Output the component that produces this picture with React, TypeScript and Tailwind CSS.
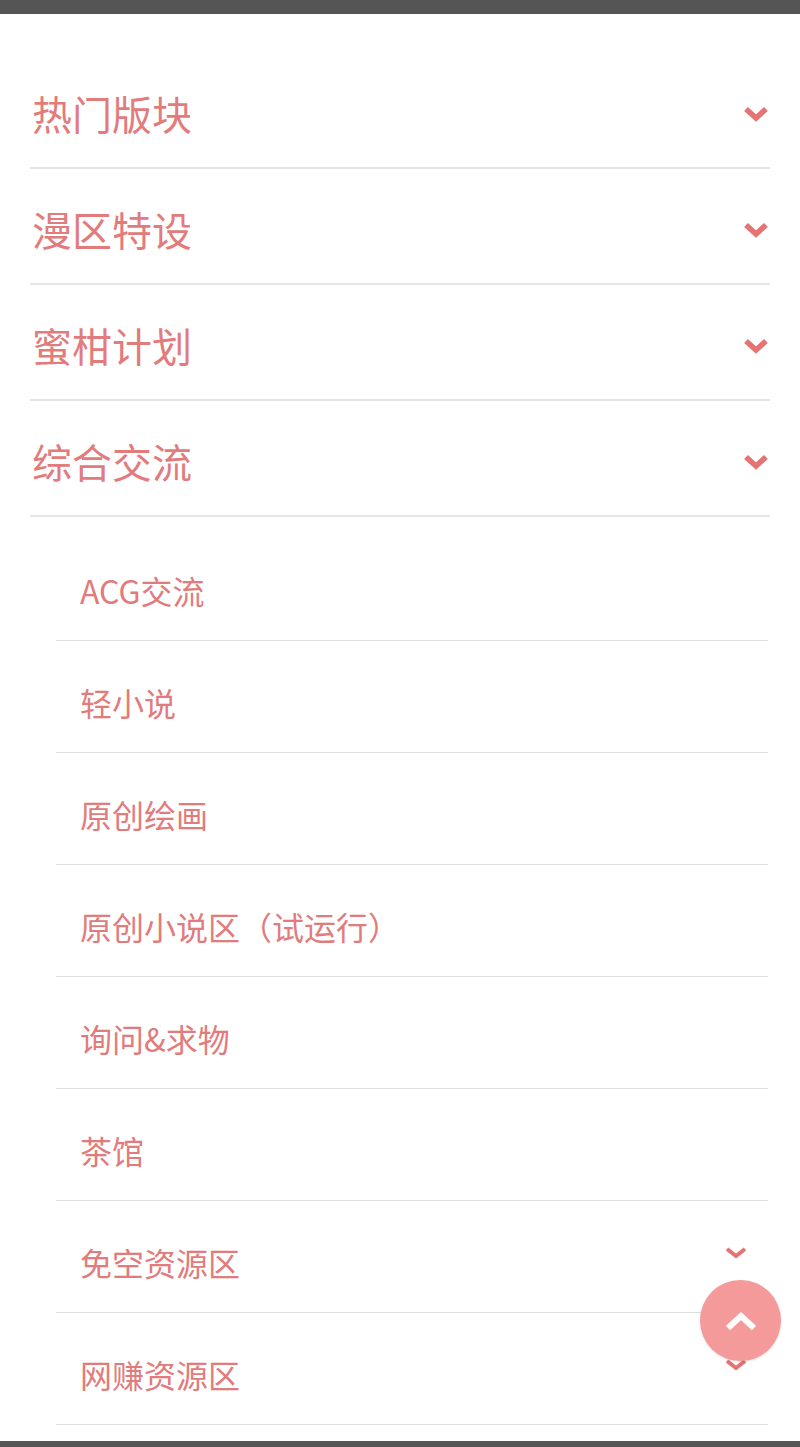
import React from "react";

const mainSections = ["热门版块", "漫区特设", "蜜柑计划", "综合交流"];

const subSections = [
  { name: "ACG交流", more: false },
  { name: "轻小说", more: false },
  { name: "原创绘画", more: false },
  { name: "原创小说区（试运行）", more: false },
  { name: "询问&求物", more: false },
  { name: "茶馆", more: false },
  { name: "免空资源区", more: true },
  { name: "网赚资源区", more: true },
];

const Chevron = ({ size = "big" }: { size?: "big" | "small" }) =>
  size === "big" ? (
    <svg width="28" height="18" viewBox="0 0 28 18" className="shrink-0">
      <polyline points="4,4 14,13 24,4" fill="none" stroke="#e57373" strokeWidth="5.5" strokeLinejoin="miter" />
    </svg>
  ) : (
    <svg width="24" height="14" viewBox="0 0 24 14" className="shrink-0">
      <polyline points="3,3 12,10 21,3" fill="none" stroke="#e57373" strokeWidth="4" strokeLinejoin="miter" />
    </svg>
  );

const App = () => {
  return (
    <div
      className="relative w-[800px] h-[1447px] flex flex-col bg-white overflow-hidden"
      style={{ fontFamily: '"Noto Sans CJK SC", "Noto Sans", sans-serif' }}
    >
      <div className="h-[14px] bg-[#555555] shrink-0" />

      <div className="flex-1 overflow-hidden pt-[39px]">
        {mainSections.map((title) => (
          <div
            key={title}
            className="mx-[30px] h-[116px] pt-[6px] flex items-center justify-between border-b-2 border-[#e6e6e6]"
          >
            <span className="pl-[2px] text-[40px] leading-none text-[#e27b7b]">{title}</span>
            <span className="mt-[2px]">
              <Chevron />
            </span>
          </div>
        ))}

        <div className="pt-3 ml-[56px] mr-[32px]">
          {subSections.map((item) => (
            <div
              key={item.name}
              className="h-[112px] pt-[10px] flex items-center justify-between border-b border-[#dedede]"
            >
              <span className="pl-[24px] text-[32px] leading-none text-[#e27b7b]">{item.name}</span>
              {item.more && (
                <span className="mr-[20px] -mt-[18px]">
                  <Chevron size="small" />
                </span>
              )}
            </div>
          ))}
        </div>
      </div>

      <div className="h-[6px] bg-[#555555] shrink-0" />

      <button className="absolute left-[700px] top-[1280px] w-[81px] h-[81px] rounded-full bg-[#f59a9a] flex items-center justify-center shadow-sm">
        <svg width="36" height="22" viewBox="0 0 36 22">
          <polyline points="5,18 18,6 31,18" fill="none" stroke="#ffffff" strokeWidth="6" />
        </svg>
      </button>
    </div>
  );
};

export default App;
